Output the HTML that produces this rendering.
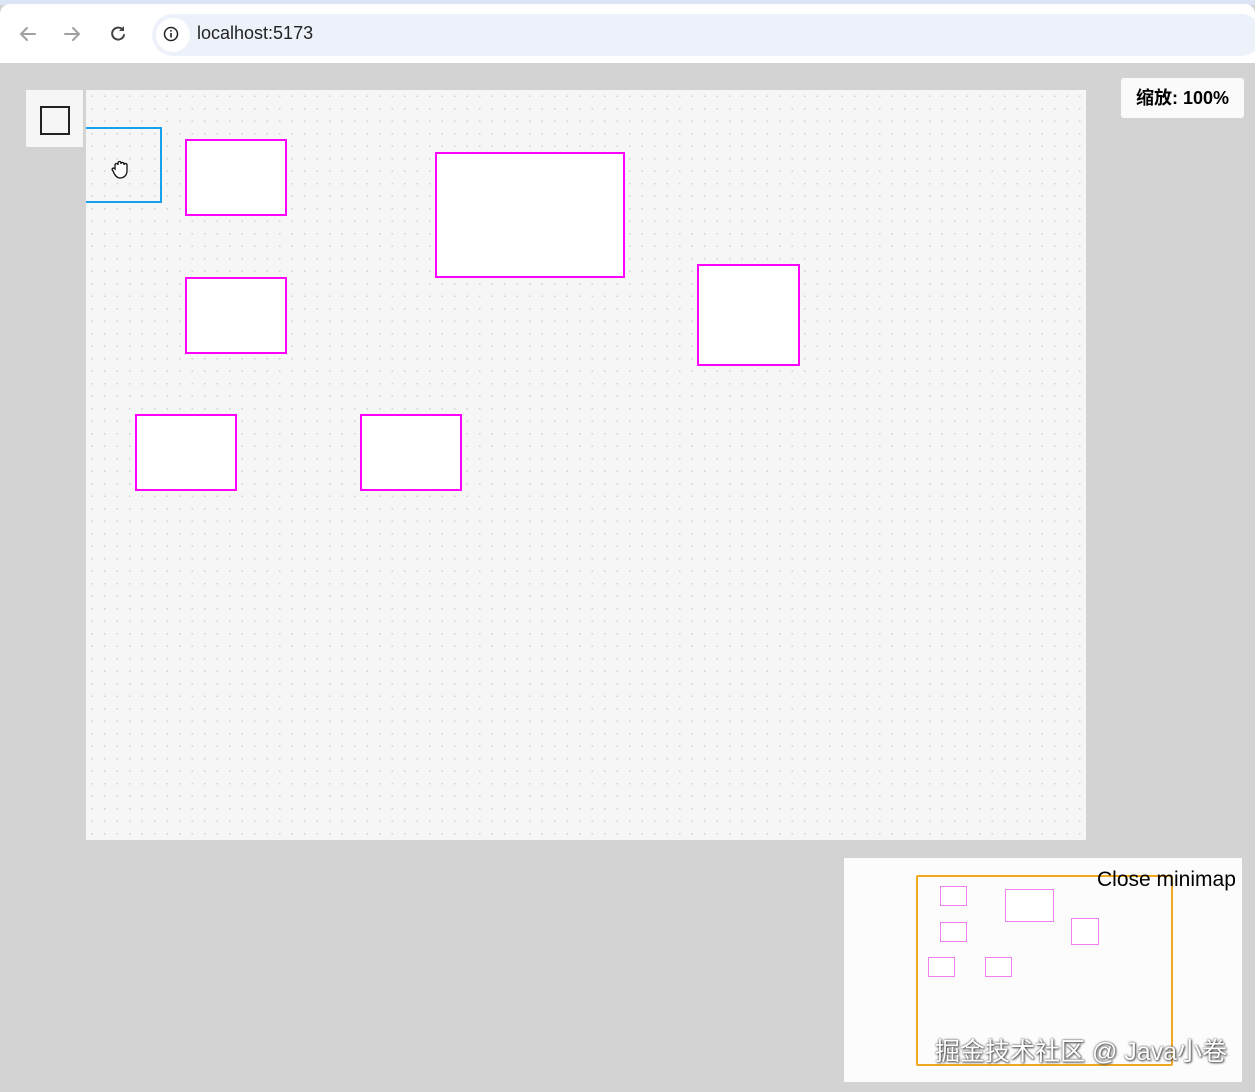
<!DOCTYPE html>
<html><head><meta charset="utf-8"><style>
body{margin:0;width:1255px;height:1092px;background:#d3d3d3;position:relative;overflow:hidden;font-family:"Liberation Sans","Noto Sans CJK SC",sans-serif}
.a{position:absolute;box-sizing:border-box}
.m{border:2px solid #f0f;background:#fff}
.n{border:1.5px solid #f07ff0;background:#fff}
</style></head><body>
<div class="a" style="left:0;top:0;width:1255px;height:5px;background:#dbe5f5"></div>
<div class="a" style="left:0;top:4px;width:1255px;height:59px;background:#fff;border-radius:10px 10px 0 0"></div>
<div class="a" style="left:152px;top:14px;width:1110px;height:42px;background:#edf2fa;border-radius:21px"></div>
<div class="a" style="left:156px;top:18px;width:34px;height:34px;background:#fff;border-radius:17px"></div>
<svg class="a" style="left:0;top:0" width="200" height="63">
<g fill="none" stroke-width="2" stroke-linecap="round">
<path d="M35 34H21M27 28l-6 6 6 6" stroke="#a0a0a0"/>
<path d="M65 34h14M73 28l6 6-6 6" stroke="#a0a0a0"/>
<path d="M123 30a6 6 0 1 0 1 5" stroke="#444"/>
<circle cx="171" cy="34" r="6.5" stroke="#222" stroke-width="1.5"/></g>
<path d="M124 26v5h-5z" fill="#444"/>
<rect x="170.2" y="33" width="1.6" height="4.5" fill="#222"/><rect x="170.2" y="30" width="1.6" height="1.6" fill="#222"/>
</svg>
<div class="a" style="left:197px;top:23px;font-size:18px;color:#222">localhost:5173</div>

<div class="a" style="left:86px;top:90px;width:1000px;height:750px;background-color:#f6f6f6;background-image:radial-gradient(circle,#d4d4d4 0.7px,transparent 1.1px);background-size:12.5px 12.5px"></div>
<div class="a" style="left:26px;top:90px;width:57px;height:57px;background:#f6f6f6"></div>
<div class="a" style="left:40px;top:106px;width:30px;height:29px;border:2px solid #222"></div>
<div class="a" style="left:86px;top:127px;width:76px;height:76px;border:2px solid #17a0f0;border-left:none"></div>
<svg class="a" style="left:109px;top:160px" width="22" height="20"><path d="M4 11c-2-2 0-4 2-2V5c0-2 3-2 3 0V3c0-2 3-2 3 0v1c0-2 3-2 3 0v1c0-2 3-2 3 0v6c0 4-3 7-7 7-3 0-5-2-7-7z" fill="#fff" stroke="#111" stroke-width="1.3"/></svg>
<div class="a m" style="left:185px;top:139px;width:102px;height:77px"></div>
<div class="a m" style="left:185px;top:277px;width:102px;height:77px"></div>
<div class="a m" style="left:435px;top:152px;width:190px;height:126px"></div>
<div class="a m" style="left:697px;top:264px;width:103px;height:102px"></div>
<div class="a m" style="left:135px;top:414px;width:102px;height:77px"></div>
<div class="a m" style="left:360px;top:414px;width:102px;height:77px"></div>

<div class="a" style="left:1121px;top:78px;width:123px;height:40px;background:#fafafa;border-radius:3px;font-weight:bold;font-size:18px;line-height:40px;text-align:center">缩放: 100%</div>

<div class="a" style="left:844px;top:858px;width:398px;height:224px;background:#fcfcfc"></div>
<div class="a" style="left:916px;top:875px;width:257px;height:191px;border:2px solid #f0a820;border-radius:2px"></div>
<div class="a n" style="left:940px;top:886px;width:27px;height:20px"></div>
<div class="a n" style="left:940px;top:922px;width:27px;height:20px"></div>
<div class="a n" style="left:1005px;top:889px;width:49px;height:33px"></div>
<div class="a n" style="left:1071px;top:918px;width:28px;height:27px"></div>
<div class="a n" style="left:928px;top:957px;width:27px;height:20px"></div>
<div class="a n" style="left:985px;top:957px;width:27px;height:20px"></div>
<div class="a" style="left:1097px;top:868px;font-size:21px;color:#000">Close minimap</div>
<div class="a" style="left:935px;top:1032px;font-size:25px;color:#fff;text-shadow:0 0 2px #333,1px 1px 2px #555">掘金技术社区 @ Java小卷</div>
</body></html>
